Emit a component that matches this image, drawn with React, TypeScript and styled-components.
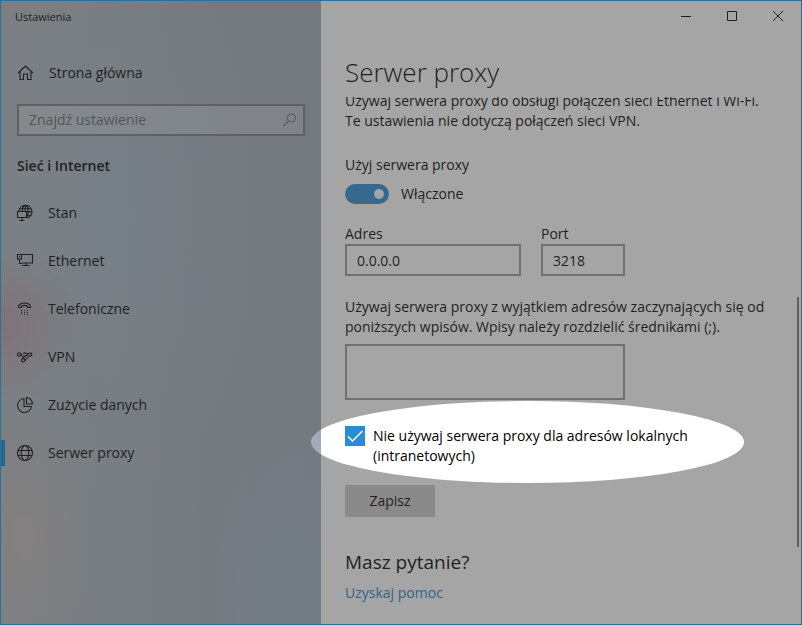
import React from "react";
import styled, { createGlobalStyle } from "styled-components";

const GlobalStyle = createGlobalStyle`
  *, *::before, *::after { box-sizing: border-box; }
  html, body, #root { height: 100%; }
  body { margin: 0; }
  body, button, input, textarea {
    font-family: "Open Sans", "Noto Sans", sans-serif;
    font-size: 14px;
    line-height: 20px;
    color: #000;
  }
  h1, h2, p { margin: 0; }
`;

const Window = styled.div`
  position: relative;
  display: flex;
  min-height: 100%;
  overflow: hidden;
  border: 1px solid #2b7099;
  background: #fff;
`;

const Sidebar = styled.aside`
  flex: 0 0 320px;
  display: flex;
  flex-direction: column;
  background:
    radial-gradient(circle at 0 52%, rgba(190, 135, 145, 0.5), rgba(190, 135, 145, 0) 80px),
    radial-gradient(ellipse at 24px 86%, rgba(200, 185, 178, 0.6), rgba(200, 185, 178, 0) 70px),
    radial-gradient(ellipse at 110px 34%, rgba(165, 190, 210, 0.45), rgba(165, 190, 210, 0) 150px),
    radial-gradient(ellipse at 300px 96%, rgba(155, 185, 205, 0.5), rgba(155, 185, 205, 0) 90px),
    linear-gradient(90deg, #b0b8bf 0, #a9b3bb 130px, #a3adb8 200px, #a3abb8 100%);
`;

const AppTitle = styled.p`
  padding: 6px 14px;
  font-size: 11px;
`;

const NavLink = styled.a<{ $active?: boolean }>`
  display: flex;
  align-items: center;
  gap: 14px;
  height: 48px;
  padding-left: 11px;
  border-left: 4px solid transparent;
  border-image: ${(p) =>
    p.$active
      ? "linear-gradient(transparent 12px, #0a84d8 12px, #0a84d8 36px, transparent 36px) 1"
      : "none"};
  color: #000;
  text-decoration: none;
`;

const HomeLink = styled(NavLink)`
  gap: 15px;
  margin-top: 16px;
`;

const Search = styled.label`
  display: flex;
  align-items: center;
  height: 32px;
  margin: 7px 16px 0;
  padding: 0 4px 0 10px;
  border: 2px solid #7a7e83;
  background: rgba(255, 255, 255, 0.24);
  color: #62666c;
`;

const SearchInput = styled.input`
  flex: 1;
  min-width: 0;
  padding: 0;
  border: 0;
  outline: 0;
  background: transparent;
  &::placeholder { color: #62666c; opacity: 1; }
`;

const SectionTitle = styled.h2`
  padding: 20px 16px 13px;
  font-size: 14px;
  font-weight: 600;
`;

const Icon = styled.svg`
  flex: none;
  width: 18px;
  height: 18px;
  fill: none;
  stroke: currentColor;
  stroke-width: 1.1;
`;

const Main = styled.main`
  flex: 1;
  min-width: 0;
  display: flex;
  flex-direction: column;
  align-items: flex-start;
  padding: 0 24px;
`;

const WindowControls = styled.div`
  display: flex;
  align-self: flex-end;
  margin-right: -24px;
`;

const ControlButton = styled.button`
  display: grid;
  place-items: center;
  width: 46px;
  height: 30px;
  padding: 0;
  border: 0;
  background: transparent;
`;

const ControlIcon = styled.svg`
  width: 12px;
  height: 12px;
  fill: none;
  stroke: #000;
`;

const PageTitle = styled.h1`
  margin-top: 21px;
  font-size: 26px;
  font-weight: 300;
  line-height: 40px;
`;

const ScrolledText = styled.div`
  margin-top: 5px;
  overflow: hidden;
`;

const Description = styled.p`
  margin-top: -6px;
`;

const FieldTitle = styled.p`
  margin-top: 24px;
`;

const SwitchRow = styled.label`
  display: flex;
  align-items: center;
  gap: 12px;
  margin-top: 9px;
`;

const Switch = styled.input`
  appearance: none;
  display: flex;
  align-items: center;
  justify-content: flex-end;
  width: 44px;
  height: 20px;
  margin: 0;
  padding-right: 5px;
  border-radius: 10px;
  background: #2a8dd4;
  &::after {
    content: "";
    width: 10px;
    height: 10px;
    border-radius: 50%;
    background: #fff;
  }
`;

const Fields = styled.div`
  display: flex;
  gap: 20px;
  margin-top: 20px;
`;

const Field = styled.label<{ $width: number }>`
  display: flex;
  flex-direction: column;
  width: ${(p) => p.$width}px;
`;

const TextInput = styled.input`
  width: 100%;
  height: 32px;
  padding: 0 10px;
  border: 2px solid #999;
  border-radius: 0;
  outline: 0;
  background: #fff;
`;

const ExceptionsLabel = styled.label`
  margin-top: 21px;
`;

const Exceptions = styled.textarea`
  width: 280px;
  height: 56px;
  margin-top: 7px;
  padding: 4px 10px;
  border: 2px solid #999;
  border-radius: 0;
  outline: 0;
  resize: none;
  background: #fff;
`;

const SpotlitRow = styled.div`
  position: relative;
  z-index: 1;
  width: 364px;
  margin-top: 26px;
  &::after {
    content: "";
    position: absolute;
    inset: -25px -35px -17px -34px;
    border-radius: 50%;
    box-shadow: 0 0 0 1000px rgba(66, 66, 66, 0.48);
    pointer-events: none;
  }
`;

const CheckRow = styled.label`
  display: flex;
  align-items: flex-start;
  gap: 8px;
`;

const CheckBox = styled.span`
  display: grid;
  flex: none;
  width: 20px;
  height: 20px;
  background: #2a8dd4;
  & > * { grid-area: 1 / 1; }
`;

const CheckInput = styled.input`
  appearance: none;
  width: 20px;
  height: 20px;
  margin: 0;
`;

const CheckMark = styled.svg`
  width: 20px;
  height: 20px;
  fill: none;
  stroke: #fff;
  stroke-width: 1.4;
  pointer-events: none;
`;

const SaveButton = styled.button`
  width: 90px;
  height: 32px;
  margin-top: 19px;
  padding: 0;
  border: 0;
  background: #ccc;
`;

const HelpTitle = styled.h2`
  margin-top: 31px;
  font-size: 19px;
  font-weight: 400;
  line-height: 28px;
`;

const HelpLink = styled.a`
  margin: 7px 0 20px;
  color: #2a7fc0;
  text-decoration: none;
`;

const ScrollThumb = styled.div`
  position: absolute;
  top: 296px;
  right: 2px;
  width: 2px;
  height: 250px;
  background: #767676;
`;

const HomeIcon = () => (
  <Icon viewBox="0 0 18 18">
    <path d="M2 9 9.500 2 17 9M4 7.500V15.500H7.500V10h4v5.500h3.500V7.500" />
  </Icon>
);
const StatusIcon = () => (
  <Icon viewBox="0 0 18 18">
    <path d="M2.800 7.500A6.600 6.600 0 1 1 11.500 14.200M6.200 7.500C6.500 4 7.800 1.400 9.200 1.400c1.700 0 3 3 3 6.600 0 2.300-.4 4.200-1.200 5.400M3.800 4.800h11M10.500 7.900H15.900M11 11.300h4M9.200 1.400v6" />
    <path d="M1.500 7.500h9v6h-9zM6 13.500v3M3.500 16.500h5" />
  </Icon>
);
const EthernetIcon = () => (
  <Icon viewBox="0 0 18 18">
    <path d="M5.500 2.500h11v8.500H6M10 11v3M6 13.500h7.500M1.500 2.500h4v4.500h-4zM3.500 7v4.500H6M3 4.500h1" />
  </Icon>
);
const PhoneIcon = () => (
  <Icon viewBox="0 0 18 18">
    <path d="M2.500 7.500V6.500c0-2 3-3.500 6-3.500s6 1.500 6 3.500v1h-3V6c-1.700-.7-4.300-.7-6 0v1.500z" />
    <path d="M5 10.500h1m2 0h1m2 0h1M5 12.500h1m2 0h1m2 0h1M5 14.500h1m2 0h1m2 0h1" />
  </Icon>
);
const VpnIcon = () => (
  <Icon viewBox="0 0 18 18">
    <circle cx="3.200" cy="6.500" r="1.700" />
    <circle cx="7.200" cy="12.300" r="1.700" />
    <path d="M4.900 6.500C6.500 6.500 6 9 8 9c1.500 0 2.500-1.500 3.500-2.500C13 4.500 15.800 4.800 15.800 6.600c0 1.500-2 2.200-3.400 1L10 5.200C9 4.500 7.500 5 7 6M6.300 10.800 9.500 7.500M8.900 12.300C10.500 11.500 9.800 9.500 12.500 9.500" />
  </Icon>
);
const UsageIcon = () => (
  <Icon viewBox="0 0 18 18">
    <path d="M8 2.500a7 7 0 1 0 7.500 8H8zM10.500 1.500v6.500H16.500A6.300 6.300 0 0 0 10.500 1.500z" />
  </Icon>
);
const GlobeIcon = () => (
  <Icon viewBox="0 0 18 18">
    <circle cx="9" cy="9" r="7.500" />
    <ellipse cx="9" cy="9" rx="3.800" ry="7.500" />
    <path d="M2 6.500h14M2 11.500h14" />
  </Icon>
);
const SearchIcon = () => (
  <Icon viewBox="0 0 18 18">
    <circle cx="10.500" cy="7" r="4" />
    <path d="M7.700 9.800 2.500 15" />
  </Icon>
);

const sections = [
  { label: "Stan", icon: StatusIcon },
  { label: "Ethernet", icon: EthernetIcon },
  { label: "Telefoniczne", icon: PhoneIcon },
  { label: "VPN", icon: VpnIcon },
  { label: "Zużycie danych", icon: UsageIcon },
  { label: "Serwer proxy", icon: GlobeIcon, active: true },
];

export default function App() {
  return (
    <Window>
      <GlobalStyle />
      <Sidebar>
        <AppTitle>Ustawienia</AppTitle>
        <HomeLink href="#home">
          <HomeIcon />
          Strona główna
        </HomeLink>
        <Search>
          <SearchInput type="text" placeholder="Znajdź ustawienie" aria-label="Znajdź ustawienie" />
          <SearchIcon />
        </Search>
        <SectionTitle>Sieć i Internet</SectionTitle>
        <nav>
          {sections.map(({ label, icon: SectionIcon, active }) => (
            <NavLink key={label} href="#section" $active={active}>
              <SectionIcon />
              {label}
            </NavLink>
          ))}
        </nav>
      </Sidebar>
      <Main>
        <WindowControls>
          <ControlButton aria-label="Minimalizuj">
            <ControlIcon viewBox="0 0 12 12"><path d="M1 6.500h10" /></ControlIcon>
          </ControlButton>
          <ControlButton aria-label="Maksymalizuj">
            <ControlIcon viewBox="0 0 12 12"><path d="M1.500 1.500h9v9h-9z" /></ControlIcon>
          </ControlButton>
          <ControlButton aria-label="Zamknij">
            <ControlIcon viewBox="0 0 12 12"><path d="m1 1 10 10M11 1 1 11" /></ControlIcon>
          </ControlButton>
        </WindowControls>
        <PageTitle>Serwer proxy</PageTitle>
        <ScrolledText>
          <Description>
            Używaj serwera proxy do obsługi połączeń sieci Ethernet i Wi-Fi.
            <br />
            Te ustawienia nie dotyczą połączeń sieci VPN.
          </Description>
        </ScrolledText>
        <FieldTitle>Użyj serwera proxy</FieldTitle>
        <SwitchRow>
          <Switch type="checkbox" role="switch" defaultChecked />
          Włączone
        </SwitchRow>
        <Fields>
          <Field $width={176}>
            Adres
            <TextInput type="text" defaultValue="0.0.0.0" />
          </Field>
          <Field $width={84}>
            Port
            <TextInput type="text" defaultValue="3218" />
          </Field>
        </Fields>
        <ExceptionsLabel htmlFor="exceptions">
          Używaj serwera proxy z wyjątkiem adresów zaczynających się od
          <br />
          poniższych wpisów. Wpisy należy rozdzielić średnikami (;).
        </ExceptionsLabel>
        <Exceptions id="exceptions" />
        <SpotlitRow>
          <CheckRow>
            <CheckBox>
              <CheckInput type="checkbox" defaultChecked />
              <CheckMark viewBox="0 0 20 20"><path d="m3 10.500 4.500 4.500L17.500 5" /></CheckMark>
            </CheckBox>
            <span>
              Nie używaj serwera proxy dla adresów lokalnych
              <br />
              (intranetowych)
            </span>
          </CheckRow>
        </SpotlitRow>
        <SaveButton>Zapisz</SaveButton>
        <HelpTitle>Masz pytanie?</HelpTitle>
        <HelpLink href="#help">Uzyskaj pomoc</HelpLink>
      </Main>
      <ScrollThumb />
    </Window>
  );
}
